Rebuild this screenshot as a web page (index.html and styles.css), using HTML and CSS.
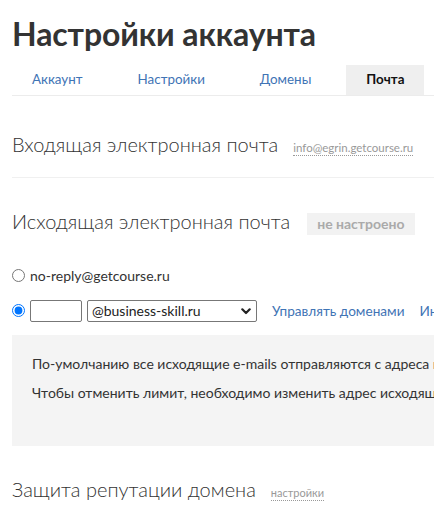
FILE: index.html
```html
<!DOCTYPE html>
<html lang="ru">
<head>
<meta charset="utf-8">
<title>Настройки аккаунта</title>
<link rel="stylesheet" href="styles.css">
</head>
<body>
<div class="page">
  <h1 class="title">Настройки аккаунта</h1>
  <ul class="tabs">
    <li class="tab"><a href="#">Аккаунт</a></li>
    <li class="tab"><a href="#">Настройки</a></li>
    <li class="tab"><a href="#">Домены</a></li>
    <li class="tab tab-active"><span>Почта</span></li>
  </ul>

  <section class="section section-incoming">
    <div class="section-head">
      <h2 class="section-title">Входящая электронная почта</h2>
      <a class="dotted" href="#">info@egrin.getcourse.ru</a>
    </div>
  </section>

  <section class="section section-outgoing">
    <div class="section-head">
      <h2 class="section-title">Исходящая электронная почта</h2>
      <span class="badge">не настроено</span>
    </div>
    <div class="options">
      <label class="option">
        <input type="radio" name="from" class="radio">
        <span>no-reply@getcourse.ru</span>
      </label>
      <div class="option">
        <input type="radio" name="from" class="radio" checked>
        <input type="text" class="text-input">
        <div class="select-wrap">
          <select class="select">
            <option>@business-skill.ru</option>
          </select>
          <svg class="chevron" width="10" height="7" viewBox="0 0 10 7"><path d="M1.3 1.3 L5 5 L8.7 1.3" fill="none" stroke="#222" stroke-width="2.2" stroke-linecap="round" stroke-linejoin="round"/></svg>
        </div>
        <a class="link" href="#">Управлять доменами</a>
        <a class="link" href="#">Инструкция по настройке</a>
      </div>
    </div>
    <div class="note">
      <p>По-умолчанию все исходящие e-mails отправляются с адреса <b>no-reply@getcourse.ru</b>. В этом случае действует лимит на отправку писем.</p>
      <p>Чтобы отменить лимит, необходимо изменить адрес исходящей почты на адрес своего домена.</p>
    </div>
  </section>

  <section class="section section-protect">
    <div class="section-head">
      <h2 class="section-title">Защита репутации домена</h2>
      <a class="dotted dotted-small" href="#">настройки</a>
    </div>
  </section>
</div>
</body>
</html>
```

FILE: styles.css
```css
html, body {
  margin: 0;
  padding: 0;
  overflow: hidden;
  background: #fff;
}
body {
  font-family: Lato, "Open Sans", "Liberation Sans", sans-serif;
  color: #333;
  font-size: 14px;
}
.page {
  width: 900px;
  padding: 0 12px;
}
.title {
  margin: 15px 0 0;
  font-size: 32px;
  line-height: 1.2;
  font-weight: 700;
  color: #333;
  letter-spacing: -0.1px;
}
.tabs {
  list-style: none;
  margin: 12px 0 0;
  padding: 0;
  display: flex;
  gap: 15px;
  border-bottom: 1px solid #ececec;
}
.tab {
  padding: 4px 20px 6px;
  line-height: 20px;
  font-size: 13.4px;
}
.tab a {
  color: #3f74b5;
  text-decoration: none;
}
.tab-active {
  background: #efefef;
  font-weight: 700;
  color: #111;
}
.section-head {
  display: flex;
  align-items: baseline;
}
.section-title {
  margin: 0;
  font-size: 20px;
  line-height: 24px;
  font-weight: 300;
  color: #333;
}
.section-incoming {
  margin-top: 36px;
  padding-bottom: 21px;
  border-bottom: 1px solid #f0f0f0;
}
.section-outgoing {
  margin-top: 31px;
}
.dotted {
  margin-left: 15px;
  font-size: 11.5px;
  color: #999;
  text-decoration: none;
  border-bottom: 1px dotted #999;
  line-height: 14px;
}
.dotted-small {
  margin-left: 15px;
  font-size: 11px;
}
.badge {
  margin-left: 17px;
  background: #f2f2f2;
  color: #aaa;
  font-weight: 700;
  font-size: 14px;
  line-height: 16px;
  padding: 3px 10px;
}
.options {
  margin-top: 30px;
  display: flex;
  flex-direction: column;
  gap: 14px;
}
.option {
  display: flex;
  align-items: center;
  height: 21px;
  font-size: 14px;
  color: #333;
}
.radio {
  width: 13px;
  height: 13px;
  margin: 0 5px 0 0;
}
.text-input {
  box-sizing: border-box;
  width: 52px;
  height: 22px;
  margin: 0 5px 0 0;
  border: 1px solid #777;
  border-radius: 2px;
  padding: 0 4px;
  font: inherit;
}
.select-wrap {
  position: relative;
  width: 170px;
  height: 22px;
}
.select {
  appearance: none;
  -webkit-appearance: none;
  box-sizing: border-box;
  width: 100%;
  height: 22px;
  border: 1px solid #777;
  border-radius: 2px;
  background: #fff;
  padding: 0 20px 0 4px;
  font-family: inherit;
  font-size: 14px;
  color: #222;
}
.chevron {
  position: absolute;
  right: 6px;
  top: 8px;
  pointer-events: none;
}
.link {
  margin-left: 15px;
  font-size: 13.6px;
  color: #3f74b5;
  text-decoration: none;
}
.note {
  margin-top: 14px;
  background: #f4f4f4;
  padding: 19px 20px 43px;
}
.note p {
  margin: 0;
  line-height: 20px;
  white-space: nowrap;
}
.note p + p {
  margin-top: 9px;
}
.note b {
  color: #111;
}
.section-protect {
  margin-top: 31px;
}
```
